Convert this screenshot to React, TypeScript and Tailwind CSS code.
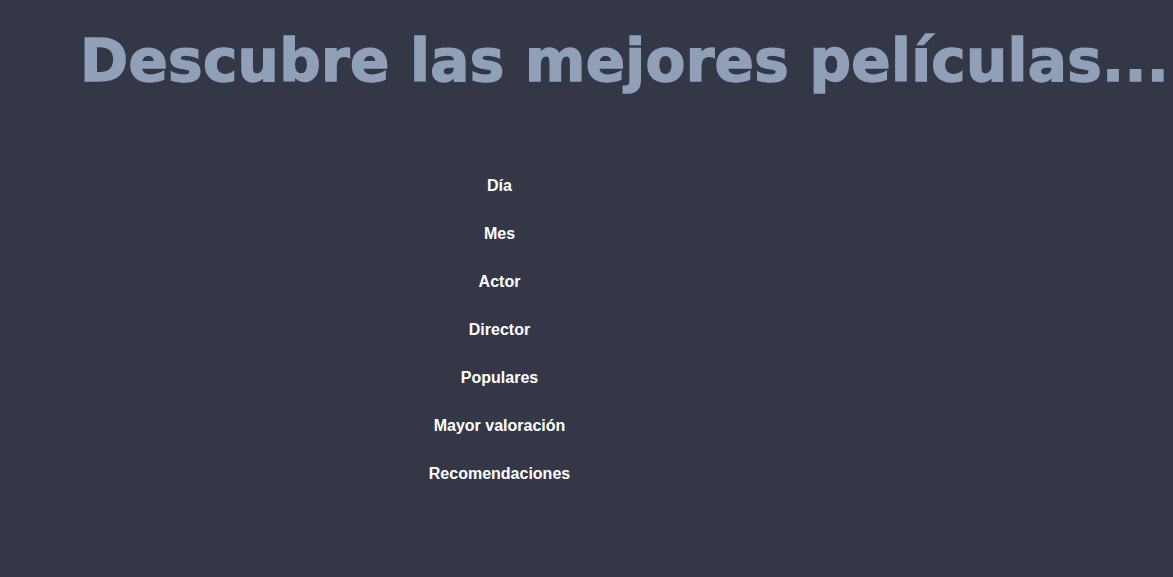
const items = ['Día', 'Mes', 'Actor', 'Director', 'Populares', 'Mayor valoración', 'Recomendaciones'];

export default function App() {
  return (
    <div className="min-h-[577px] w-full bg-[#343746] font-['Liberation_Sans',Arial,sans-serif] overflow-hidden">
      <h1 className="pl-[80px] pt-[26px] font-['DejaVu_Sans',sans-serif] text-[58px] leading-[70px] font-bold text-[#8fa0b8] whitespace-nowrap [-webkit-text-stroke:1.5px_#8fa0b8] tracking-[0.3px]">
        Descubre las mejores películas...
      </h1>
      <ul className="mt-[66px] w-[999px] flex flex-col items-center">
        {items.map((item) => (
          <li key={item} className="h-[48px] text-[16px] font-bold text-white leading-[48px]">
            {item}
          </li>
        ))}
      </ul>
    </div>
  );
}
